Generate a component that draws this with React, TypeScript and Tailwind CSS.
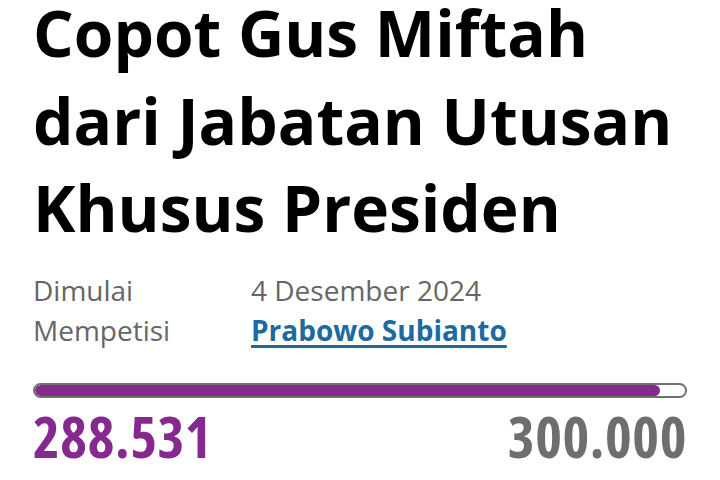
const App: React.FC = () => {
    const signed = 288531;
    const goal = 300000;
    const percent = (signed / goal) * 100;

    return (
        <div className="w-[720px] h-[480px] overflow-hidden bg-white px-[33px] font-['Open_Sans',sans-serif]">
            <h1 className="flex flex-col gap-[21.5px] text-[64px] leading-[66px] font-bold text-black">
                <span>Copot Gus Miftah</span>
                <span>dari Jabatan Utusan</span>
                <span>Khusus Presiden</span>
            </h1>

            <div className="mt-[29px] grid grid-cols-[218px_1fr] text-[28px] leading-[40px] text-[#666666]">
                <span>Dimulai</span>
                <span>4 Desember 2024</span>
                <span>Mempetisi</span>
                <a href="#" className="font-bold text-[#1c6aa0] underline underline-offset-[4px] decoration-[3px]">
                    Prabowo Subianto
                </a>
            </div>

            <div className="mt-[33px] h-[15px] w-[654px] rounded-full border-2 border-[#707070] bg-white overflow-hidden">
                <div className="h-full rounded-full bg-[#85298e]" style={{ width: `${percent}%` }} />
            </div>

            <div className="mt-[7px] flex justify-between items-baseline text-[57px] leading-[62px] font-bold tracking-[0.6px] [font-stretch:75%]">
                <span className="text-[#85298e]">288.531</span>
                <span className="text-[#6e6e6e]">300.000</span>
            </div>
        </div>
    );
};

export default App;
